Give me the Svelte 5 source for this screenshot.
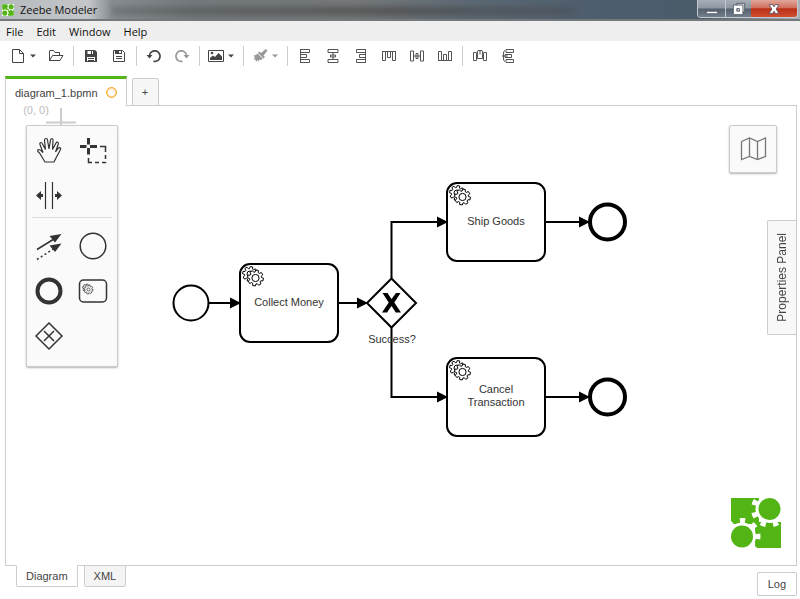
<script>
  const menus = ['File', 'Edit', 'Window', 'Help'];

  const alignSide = 'M3.5 1V15M3.5 1.5H12.5V4.5H3.5M3.5 6.5H9.5V9.5H3.5M3.5 11.5H12.5V14.5H3.5';
  const alignMid = 'M3 1.5H13V4.5H3ZM3 11.5H13V14.5H3ZM5.5 7H10.5V9H5.5ZM8 4.5V11.5';
  const alignTools = [
    { name: 'Align left', d: alignSide, t: '' },
    { name: 'Align center', d: alignMid, t: '' },
    { name: 'Align right', d: alignSide, t: 'matrix(-1 0 0 1 16 0)' },
    { name: 'Align top', d: alignSide, t: 'matrix(0 1 1 0 0 0)' },
    { name: 'Align middle', d: alignMid, t: 'matrix(0 1 1 0 0 0)' },
    { name: 'Align bottom', d: alignSide, t: 'matrix(0 -1 1 0 0 16)' }
  ];
  const spread = 'M4 4.5H1.5V12.5H4.5V4.5M5.5 4V10.5H10.5V4M5 4Q5.5 2.5 7 2.5H9Q10.5 2.5 11 4M8 2.5V6.500M11.5 4.5V12.5H14.5V4.5H12';
  const spreadTools = [
    { name: 'Distribute horizontally', d: spread, t: '' },
    { name: 'Distribute vertically', d: 'M6 1.5H13.5V4.5H6ZM6 11.5H13.5V14.5H6ZM5 6.5H11.5V9.5H5ZM5 2.5Q3.500 3 3.500 5V11Q3.500 13 5 13.500M2 8H8', t: '' }
  ];

  function gear(cx, cy, outer, inner, teeth = 8) {
    const step = (Math.PI * 2) / teeth;
    const pts = [];
    for (let i = 0; i < teeth; i++) {
      const a = i * step + 0.2;
      for (const [r, o] of [[inner, -0.3], [outer, -0.18], [outer, 0.18], [inner, 0.3]]) {
        pts.push(`${(cx + r * Math.cos(a + o * step * 1.2)).toFixed(2)} ${(cy + r * Math.sin(a + o * step * 1.2)).toFixed(2)}`);
      }
    }
    return `M${pts.join('L')}Z`;
  }

  const tasks = [
    { x: 234, y: 158, lines: ['Collect Money'] },
    { x: 441, y: 77, lines: ['Ship Goods'] },
    { x: 441, y: 252, lines: ['Cancel', 'Transaction'] }
  ];
  const flows = [
    'M203 197H233',
    'M332 197H360',
    'M385.500 172V116H440',
    'M385.500 221V291H440',
    'M540 116H582',
    'M540 291H582'
  ];
</script>

{#snippet gears(x, y)}
  <path class="cog" d={gear(x, y, 7.500, 5.500)} />
  <circle class="cog" cx={x} cy={y} r="3" />
  <path class="cog" d={gear(x + 5.5, y + 4, 8, 6)} />
  <circle class="cog" cx={x + 5.5} cy={y + 4} r="3.600" />
{/snippet}

{#snippet logo()}
  <path d="M0 0H28V26H0ZM24 24H50V50H24Z" fill="#52b415" />
  <g fill="#fff">
    <circle cx="38.500" cy="11" r="14" />
    <circle cx="11" cy="38.500" r="14" />
  </g>
  <g fill="none" stroke="#fff" stroke-width="6">
    <circle cx="38.500" cy="11" r="15.500" stroke-dasharray="5 7.173" transform="rotate(13 38.500 11)" />
    <circle cx="11" cy="38.500" r="15.500" stroke-dasharray="5 7.173" transform="rotate(-9 11 38.500)" />
  </g>
  <circle cx="38.500" cy="11" r="11" fill="#52b415" />
  <circle cx="11" cy="38.500" r="11" fill="#52b415" />
{/snippet}

{#snippet caret()}
  <svg class="caret" viewBox="0 0 8 8" aria-hidden="true"><path d="M1 2.500H7L4 5.500Z" /></svg>
{/snippet}

<div class="app">
  <header class="titlebar">
    <svg class="appicon" viewBox="-1 -1 52 52" aria-hidden="true">
      <rect x="-1" y="-1" width="52" height="52" fill="#fff" />
      {@render logo()}
    </svg>
    <h1>Zeebe Modeler</h1>
    <div class="winbuttons">
      <button class="min" aria-label="Minimize">
        <svg viewBox="0 0 16 16"><path d="M1.500 10.500H14.500V13.500H1.500Z" fill="#fff" stroke="#4b5563" /></svg>
      </button>
      <button class="max" aria-label="Restore">
        <svg viewBox="0 0 16 16">
          <path d="M5.500 1.500H14.500V11.500H5.500Z" fill="#ddd" stroke="#4b5563" />
          <path d="M1.500 3.500H12.500V14.500H1.500ZM5.500 7.500V10.500H8.500V7.500Z" fill="#fff" fill-rule="evenodd" stroke="#4b5563" />
        </svg>
      </button>
      <button class="close" aria-label="Close">
        <svg viewBox="0 0 16 16"><path d="M2.500 3H6.500L8 5.500L9.500 3H13.500L10.500 8L13.500 13H9.500L8 10.500L6.500 13H2.500L5.500 8Z" fill="#fff" stroke="#5b5060" /></svg>
      </button>
    </div>
  </header>

  <nav class="menubar">
    {#each menus as m}<button>{m}</button>{/each}
  </nav>

  <div class="toolbar" role="toolbar" aria-label="Tools">
    <button class="wide" aria-label="New">
      <svg class="ic" viewBox="0 0 16 16"><path d="M2.500 1.500H9.500L13.500 5.500V14.500H2.500ZM9.500 1.500V5.500H13.500" /></svg>
      {@render caret()}
    </button>
    <button aria-label="Open">
      <svg class="ic" viewBox="0 0 16 16"><path d="M1.500 12.500V3Q1.500 2.500 2 2.500H5.500L7 4.500H11.500V7.500M1.500 12.500L4.500 7.500H15L12 12.500Z" /></svg>
    </button>
    <i></i>
    <button aria-label="Save">
      <svg class="ic" viewBox="0 0 16 16">
        <path class="solid" d="M2 2H12L14 4V14H2Z" />
        <path d="M4.500 3H10V6H4.500ZM4 9H12V13H4Z" fill="#fff" stroke="none" />
        <path d="M8.500 3V6M5 10.500H11M5 12.500H11" />
      </svg>
    </button>
    <button aria-label="Save as">
      <svg class="ic" viewBox="0 0 16 16">
        <path d="M2.500 2.500H11.500L13.500 4.500V13.500H2.500Z" />
        <path class="solid" d="M4 2H11V6H4Z" />
        <path d="M8 3H10V5H8Z" fill="#fff" stroke="none" />
        <path d="M5 8.500H11M5 10.500H11" />
      </svg>
    </button>
    <i></i>
    <button aria-label="Undo">
      <svg class="ic" viewBox="0 0 16 16"><path class="thick" d="M3.500 7.500A5.300 5.300 0 1 1 7.500 13.300" /><path class="solid" d="M0.500 7H6.500L3.500 10.500Z" /></svg>
    </button>
    <button class="off" aria-label="Redo">
      <svg class="ic" viewBox="0 0 16 16"><path class="thick" d="M12.500 7.500A5.300 5.300 0 1 0 8.500 13.300" /><path class="solid" d="M9.500 7H15.500L12.500 10.500Z" /></svg>
    </button>
    <i></i>
    <button class="wide" aria-label="Export image">
      <svg class="ic" viewBox="0 0 16 16">
        <path d="M0.500 2.500H15.500V13.500H0.500Z" />
        <path class="solid" d="M2 12V10L5 7.500L7 9L10.500 5L14 8.500V12Z" />
        <circle class="solid" cx="4" cy="5" r="1.300" />
      </svg>
      {@render caret()}
    </button>
    <i></i>
    <button class="wide off" aria-label="Set color">
      <svg class="ic" viewBox="0 0 16 16"><path class="solid" d="M14 1L15.500 2.500L11.500 7.500L13 9L11.500 10.500L6 5L7.500 3.500L9 5ZM5.500 5.500L11 11L8.500 12L7.500 11.500L6.500 13.500L5.500 12L4 14L3.500 11.500L1.500 11.500L3 9.500L1.500 7.500L4 7Z" /></svg>
      {@render caret()}
    </button>
    <i></i>
    {#each alignTools as t}
      <button aria-label={t.name}><svg class="ic thin" viewBox="0 0 16 16"><path d={t.d} transform={t.t} /></svg></button>
    {/each}
    <i></i>
    {#each spreadTools as t}
      <button aria-label={t.name}><svg class="ic thin" viewBox="0 0 16 16"><path d={t.d} transform={t.t} /></svg></button>
    {/each}
  </div>

  <div class="tabs">
    <div class="tab active">
      <span>diagram_1.bpmn</span>
      <button class="dirty" aria-label="Close tab"></button>
    </div>
    <button class="tab add" aria-label="Create diagram">+</button>
  </div>

  <main class="canvas">
    <svg class="diagram" role="img" aria-label="BPMN diagram">
      <defs>
        <marker id="arrow" viewBox="0 0 12 12" refX="10" refY="6" markerWidth="12" markerHeight="12" markerUnits="userSpaceOnUse" orient="auto">
          <path d="M1 0.500L12 6L1 11.500Z" />
        </marker>
      </defs>
      <text class="origin" x="30" y="8">(0, 0)</text>
      <path class="cross" d="M55 2V20M40 16.500H70" />

      {#each flows as d}<path class="flow" {d} marker-end="url(#arrow)" />{/each}

      <circle class="shape" cx="185" cy="197" r="17.500" />
      {#each tasks as t}
        <rect class="shape" x={t.x} y={t.y} width="98" height="78" rx="10" />
        {@render gears(t.x + 10, t.y + 10)}
        {#each t.lines as line, i}
          <text x={t.x + 49} y={t.y + 42 + i * 13 - (t.lines.length - 1) * 7}>{line}</text>
        {/each}
      {/each}
      <path class="shape" d="M385.500 172.500L410 197L385.500 221.500L361 197Z" />
      <path d="M376.500 187H381.500L385.500 193L390 187H394.500L388.300 196.500L395 206.500H389.800L385.500 200L381 206.500H376L382.700 196.500Z" />
      <text x="386" y="237">Success?</text>
      <circle class="end" cx="601.500" cy="116" r="17.500" />
      <circle class="end" cx="601.500" cy="291" r="17.500" />
    </svg>

    <div class="palette">
      <div class="group">
        <button aria-label="Hand tool">
          <svg viewBox="0 0 30 30"><path class="fine" d="M11 27L8 22Q6 18 4 16.500Q3 15 4.500 14.500Q6.500 14.500 9 17.500L6 9.500Q5.500 7.500 7 7.500Q8 7.500 8.500 9L11.500 14.500L10.500 5.500Q10.500 3.500 12 3.500Q13.500 3.500 13.500 5L15 14L16.500 5Q17 3.500 18 3.500Q19.500 4 19 6L18.500 14.500L22 8Q23 6.500 24 7.500Q25 8 24 10L21.500 17L24 13.500Q25.500 12 26.500 13Q27 14 26 15.500L22.500 22L20 27Z" /></svg>
        </button>
        <button aria-label="Lasso tool">
          <svg viewBox="0 0 30 30"><path d="M2 11.500H8.500M12 11.500H19M10.500 3V9.500M10.500 13V19.500" stroke="#333" stroke-width="3" /><path class="line" d="M22 11.500H27.500V17M27.500 20V24M27.500 27V27.500H24M21 27.500H17M14 27.500H10.500V23" /></svg>
        </button>
        <button aria-label="Space tool">
          <svg viewBox="0 0 30 30"><path class="fine" d="M11.500 2V29M18.500 2V29" /><path d="M2 15.500L7 11V14H9V17H7V20ZM28 15.500L23 11V14H21V17H23V20Z" /></svg>
        </button>
      </div>
      <hr />
      <div class="group">
        <button aria-label="Connect">
          <svg viewBox="0 0 30 30"><path class="line" d="M3 18.500L20 8" /><path class="line" stroke-dasharray="2 2.500" d="M3 28.500L20 17.500" /><path d="M27.500 3L21 11.500L15.500 5ZM27.500 12.500L21 21L15.500 14.500Z" /></svg>
        </button>
        <button aria-label="Start event"><svg viewBox="0 0 30 30"><circle class="line" cx="15" cy="15" r="12.800" /></svg></button>
        <button aria-label="End event"><svg viewBox="0 0 30 30"><circle cx="15" cy="15" r="11.500" fill="none" stroke="#333" stroke-width="4" /></svg></button>
        <button aria-label="Service task">
          <svg viewBox="0 0 30 30">
            <rect class="line" x="1.500" y="4" width="27" height="22" rx="4" />
            <g fill="#fafafa" stroke="#444" stroke-width=".8"><path d={gear(8.500, 12, 4, 3)} /><path d={gear(10.500, 13.500, 4.600, 3.400)} /><circle cx="10.500" cy="13.500" r="1.500" /></g>
          </svg>
        </button>
        <button aria-label="Gateway"><svg viewBox="0 0 30 30"><path class="line" d="M15 2L28 15L15 28L2 15ZM10 10L20 20M20 10L10 20" /></svg></button>
      </div>
    </div>

    <button class="minimap" aria-label="Open minimap">
      <svg viewBox="0 0 28 28"><path d="M2.500 6.500L10.500 3L18.500 6.500L26.500 3V21.500L18.500 24.500L10.500 21.500L2.500 24.500ZM10.500 3V21.500M18.500 6.500V24.500" /></svg>
    </button>

    <button class="props"><span>Properties Panel</span></button>

    <svg class="brand" viewBox="0 0 50 50" aria-label="Zeebe logo">{@render logo()}</svg>
  </main>

  <footer>
    <div class="views">
      <button class="view current">Diagram</button>
      <button class="view">XML</button>
    </div>
    <button class="log">Log</button>
  </footer>
</div>

<style>
  :global(body) { background: #fff; }
  .app {
    height: 100vh;
    display: flex;
    flex-direction: column;
    font: 11px "Liberation Sans", Arial, sans-serif;
    color: #444;
    overflow: hidden;
  }
  button {
    font: inherit;
    color: inherit;
    background: none;
    border: 0;
    margin: 0;
    padding: 0;
    display: flex;
    align-items: center;
    justify-content: center;
  }

  .titlebar {
    flex: none;
    height: 21px;
    box-sizing: border-box;
    border-bottom: 2px solid #74787b;
    display: flex;
    align-items: center;
    gap: 6px;
    padding: 0 2px;
    position: relative;
    overflow: hidden;
    background: linear-gradient(90deg, #b5babd 0, #c4c7ca 11%, #868c90 14%, #73797c 24%, #74787a 45%, #5d6a75 58%, #4d5d6d 75%, #4b5b6a 88%, #aab2b8 100%);
  }
  .titlebar::before {
    content: "";
    position: absolute;
    left: 14%;
    right: 28%;
    top: 7px;
    height: 8px;
    background: linear-gradient(90deg, rgba(60, 60, 60, .3), rgba(62, 58, 56, .6) 60%, rgba(70, 66, 64, .3));
    filter: blur(3px);
  }
  .appicon { width: 12px; height: 12px; }
  h1 {
    margin: 0;
    flex: 1;
    font: 11px "Open Sans", "Noto Sans", sans-serif;
    color: #111;
  }
  .winbuttons {
    display: flex;
    align-self: flex-start;
    height: 18px;
    box-sizing: border-box;
    border: 1px solid #c5cad0;
    border-top: 0;
    border-radius: 0 0 4px 4px;
    overflow: hidden;
  }
  .winbuttons button {
    width: 27px;
    background: linear-gradient(#a7afb8 0, #8d96a1 48%, #55616f 52%, #727e8c 100%);
  }
  .winbuttons .max { width: 26px; border-left: 1px solid #c5cad0; }
  .winbuttons .close { width: 46px; background: linear-gradient(#e0a79c 0, #d0705d 45%, #b92f16 52%, #cf5030 100%); }
  .winbuttons svg { width: 14px; height: 14px; }

  .menubar {
    flex: none;
    height: 20px;
    display: flex;
    gap: 13px;
    padding: 0 6px;
    background: #eee;
    font: 11px "Open Sans", "Noto Sans", sans-serif;
    color: #111;
  }

  .toolbar {
    flex: none;
    height: 29px;
    display: flex;
    align-items: center;
    padding-left: 5px;
  }
  .toolbar button { width: 28px; height: 24px; gap: 3px; }
  .toolbar .wide { width: 37px; }
  .toolbar .off { opacity: .55; }
  .toolbar i { width: 1px; height: 20px; margin: 0 3px; background: #ccc; }
  .ic { width: 16px; height: 16px; fill: none; stroke: #444; }
  .ic .solid { fill: #444; stroke: none; }
  .ic .thick { stroke-width: 1.700; }
  .thin { stroke: #555; }
  .caret { width: 8px; height: 8px; fill: #444; }

  .tabs {
    flex: none;
    display: flex;
    align-items: flex-end;
    gap: 5px;
    padding: 6px 5px 0;
    margin-bottom: -1px;
    position: relative;
    z-index: 1;
  }
  .tab { box-sizing: border-box; display: flex; align-items: center; border: 1px solid #ccc; border-bottom: 0; }
  .active { height: 30px; padding: 0 9px; gap: 8px; background: #fff; border-top: 3px solid #52b415; }
  .dirty { width: 11px; height: 11px; border: 1px solid #fba51f; box-shadow: inset 0 0 0 1px #fdd28f; border-radius: 50%; }
  .add { width: 27px; height: 28px; background: #f7f7f7; border-bottom: 1px solid #ccc; border-radius: 2px 2px 0 0; }

  .canvas {
    flex: 1;
    position: relative;
    margin: 0 3px 0 5px;
    border: 1px solid #ccc;
    min-height: 0;
    overflow: hidden;
  }
  .diagram { position: absolute; width: 100%; height: 100%; }
  .diagram text { font-size: 11px; fill: #333; text-anchor: middle; }
  .diagram .origin { fill: #bbb; }
  .cross { stroke: #ccc; stroke-width: 2; }
  .flow { fill: none; stroke: #000; stroke-width: 2; }
  .shape { fill: #fff; stroke: #000; stroke-width: 2; }
  .end { fill: #fff; stroke: #000; stroke-width: 4; }
  .cog { fill: #fff; stroke: #000; stroke-width: 1; }

  .palette {
    position: absolute;
    left: 20px;
    top: 19px;
    width: 88px;
    padding: 2px 2px 8px 0;
    background: #fafafa;
    border: 1px solid #ccc;
    border-radius: 2px;
    box-shadow: 0 1px 2px rgba(0, 0, 0, .3);
  }
  .group { display: grid; grid-template-columns: 1fr 1fr; row-gap: 1px; }
  .group button { height: 44px; }
  .group svg { width: 30px; height: 30px; fill: #333; }
  .group .line { fill: none; stroke: #333; stroke-width: 1.500; }
  .group .fine { fill: none; stroke: #333; stroke-width: 1.200; }
  hr { border: 0; height: 1px; background: #ddd; margin: 0 3px 6px 5px; }

  .minimap {
    position: absolute;
    right: 19px;
    top: 19px;
    width: 48px;
    height: 48px;
    background: #fafafa;
    border: 1px solid #ccc;
    border-radius: 2px;
    box-shadow: 0 1px 2px rgba(0, 0, 0, .3);
  }
  .minimap svg { width: 28px; height: 28px; fill: none; stroke: #777; stroke-width: 1.300; }

  .props {
    position: absolute;
    right: 0;
    top: 114px;
    width: 29px;
    padding: 12px 0;
    background: #f8f8f8;
    border: 1px solid #ccc;
    border-right: 0;
    border-radius: 2px 0 0 2px;
  }
  .props span { writing-mode: vertical-rl; transform: rotate(180deg); font-size: 12px; }

  .brand { position: absolute; right: 15px; bottom: 17px; width: 50px; height: 50px; }

  footer {
    flex: none;
    height: 33px;
    display: flex;
    justify-content: space-between;
    padding: 0 3px 0 16px;
  }
  .views { display: flex; gap: 6px; margin-top: -1px; position: relative; }
  .view {
    height: 22px;
    padding: 0 9px;
    background: #f4f4f4;
    border: 1px solid #ccc;
    border-radius: 0 0 2px 2px;
  }
  .current { background: #fff; border-top-color: #fff; }
  .log { margin-top: 6px; height: 24px; padding: 0 10px; border: 1px solid #ccc; border-radius: 2px; }
</style>
